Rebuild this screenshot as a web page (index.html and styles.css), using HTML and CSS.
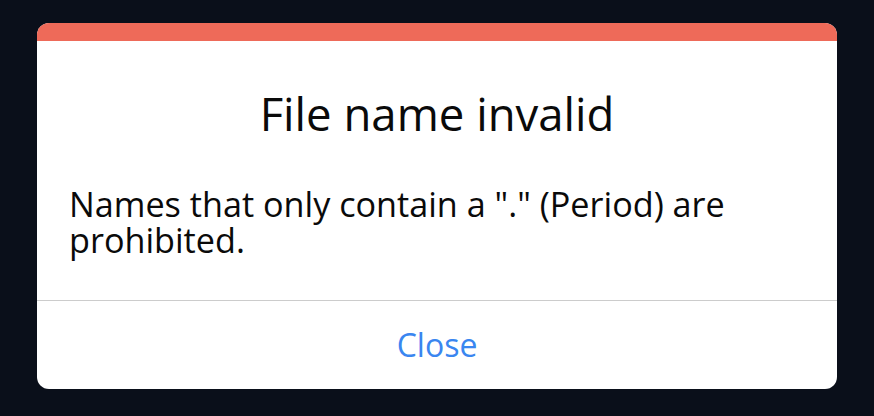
FILE: index.html
```html
<!DOCTYPE html>
<html lang="en">
<head>
<meta charset="utf-8">
<title>File name invalid</title>
<link rel="stylesheet" href="styles.css">
</head>
<body>
<div class="page">
  <div class="dialog" role="alertdialog">
    <div class="dialog-bar"></div>
    <h1 class="dialog-title">File name invalid</h1>
    <p class="dialog-message">Names that only contain a "." (Period) are prohibited.</p>
    <div class="dialog-footer">
      <button class="dialog-button" type="button">Close</button>
    </div>
  </div>
</div>
</body>
</html>
```
FILE: styles.css
```css
html, body {
  margin: 0;
  padding: 0;
  height: 100%;
}
body {
  background: #0a0f1a;
  font-family: "Open Sans", "Liberation Sans", sans-serif;
}
.page {
  display: flex;
  justify-content: center;
  padding-top: 23px;
}
.dialog {
  width: 800px;
  background: #ffffff;
  border-radius: 12px;
  overflow: hidden;
  display: flex;
  flex-direction: column;
}
.dialog-bar {
  height: 18px;
  flex: none;
  background: #ee6a59;
}
.dialog-title {
  margin: 46px 0 0;
  height: 52px;
  font-size: 45.5px;
  line-height: 52px;
  font-weight: 400;
  text-align: center;
  color: #0a0a0a;
}
.dialog-message {
  margin: 47px 0 0;
  padding: 0 32px 42px;
  font-size: 34.2px;
  line-height: 36px;
  color: #0a0a0a;
  border-bottom: 1px solid #cccccc;
}
.dialog-footer {
  height: 88px;
  flex: none;
  display: flex;
  align-items: center;
  justify-content: center;
}
.dialog-button {
  border: 0;
  background: none;
  padding: 0;
  font-family: inherit;
  font-size: 32px;
  line-height: 36px;
  color: #3a86f0;
  cursor: pointer;
}
```
